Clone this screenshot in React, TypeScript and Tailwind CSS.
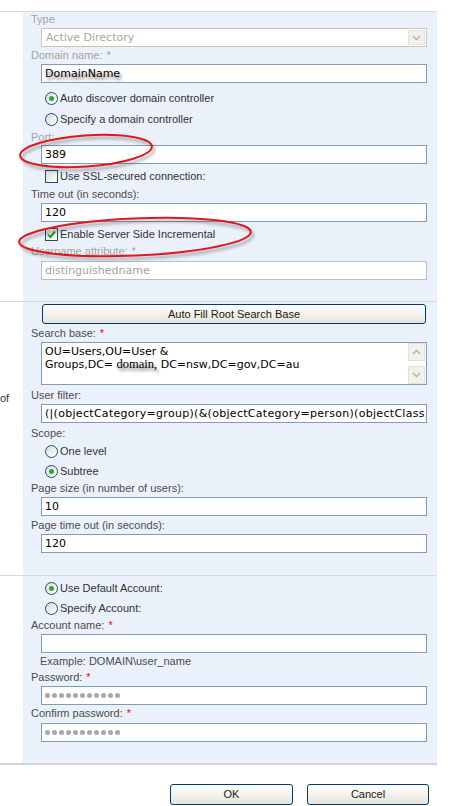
import React from "react";

const inputFont = "font-['DejaVu_Sans',Verdana,sans-serif] text-[11px]";

function Label({text, req, disabled, className = ""}: {
    text: string,
    req?: boolean,
    disabled?: boolean,
    className?: string
}) {
    return (
        <div className={"h-[14px] leading-[14px] whitespace-nowrap " + (disabled ? "text-[#a3a3a3] " : "text-[#4d4d4d] ") + className}>
            {text}
            {req && <span className={"ml-[4px] " + (disabled ? "text-[#a3a3a3]" : "text-[#ff0000]")}>*</span>}
        </div>
    )
}

function TextBox({value, disabled, className = ""}: {
    value?: React.ReactNode,
    disabled?: boolean,
    className?: string
}) {
    return (
        <div className={"ml-[10px] w-[386px] h-[19px] bg-white border px-[3px] leading-[17px] overflow-hidden whitespace-nowrap " + inputFont + " " +
            (disabled ? "border-[#b4bfcb] text-[#a3a3a3] " : "border-[#7f9db9] text-black ") + className}>
            {value}
        </div>
    )
}

function Dots() {
    return (
        <div className="flex items-center gap-[2px] h-full">
            {Array.from({length: 11}).map((_, i) =>
                <span key={i} className="w-[5px] h-[5px] rounded-full bg-[#a9a9a9]"/>)}
        </div>
    )
}

function Radio({checked}: {checked?: boolean}) {
    return (
        <span className="w-[13px] h-[13px] rounded-full border border-[#1c5180] bg-linear-to-br from-[#dcdcd5] to-white flex items-center justify-center shrink-0">
            {checked && <span className="w-[5px] h-[5px] rounded-full bg-[#2fa82f]"/>}
        </span>
    )
}

function RadioRow({label, checked, className = ""}: {label: string, checked?: boolean, className?: string}) {
    return (
        <div className={"ml-[14px] flex items-center gap-[2px] text-[#333333] whitespace-nowrap " + className}>
            <Radio checked={checked}/>
            <span>{label}</span>
        </div>
    )
}

function CheckRow({label, checked, className = ""}: {label: string, checked?: boolean, className?: string}) {
    return (
        <div className={"ml-[14px] h-[14px] flex items-center gap-[2px] text-[#333333] whitespace-nowrap " + className}>
            <span className="w-[13px] h-[13px] border border-[#1c5180] bg-linear-to-br from-[#dcdcd5] to-white flex items-center justify-center shrink-0">
                {checked &&
                    <svg width="9" height="9" viewBox="0 0 9 9">
                        <polyline points="1,4.5 3.5,7 8,1.5" fill="none" stroke="#21a121" strokeWidth="2"/>
                    </svg>}
            </span>
            <span>{label}</span>
        </div>
    )
}

function Chevron({up}: {up?: boolean}) {
    return (
        <svg width="9" height="6" viewBox="0 0 9 6">
            <polyline points={up ? "1,5 4.5,1.5 8,5" : "1,1 4.5,4.5 8,1"} fill="none" stroke="#b9b9b3" strokeWidth="1.6"/>
        </svg>
    )
}

function XpButton({text, className = ""}: {text: string, className?: string}) {
    return (
        <div className={"h-[20px] rounded-[3px] border border-[#003c74] bg-linear-to-b from-white to-[#e6e4da] flex items-center justify-center text-[#1a1a1a] " + className}>
            {text}
        </div>
    )
}

// red hand-drawn circles over the screenshot
function Annotations() {
    return (
        <svg className="absolute left-0 top-0 pointer-events-none" width="452" height="806">
            <defs>
                <filter id="blur" x="-20%" y="-50%" width="140%" height="200%">
                    <feGaussianBlur stdDeviation="1.5"/>
                </filter>
            </defs>
            <ellipse cx="88" cy="154" rx="66" ry="15.5" transform="rotate(-4 88 154)" fill="none" stroke="#000" strokeOpacity="0.3" strokeWidth="2.5" filter="url(#blur)"/>
            <ellipse cx="86" cy="151" rx="66" ry="15.5" transform="rotate(-4 86 151)" fill="none" stroke="#e3161d" strokeWidth="2"/>
            <ellipse cx="137" cy="240" rx="116" ry="18.5" transform="rotate(-2.5 137 240)" fill="none" stroke="#000" strokeOpacity="0.3" strokeWidth="2.5" filter="url(#blur)"/>
            <ellipse cx="135" cy="237" rx="116" ry="18.5" transform="rotate(-2.5 135 237)" fill="none" stroke="#e3161d" strokeWidth="2"/>
        </svg>
    )
}

function ServerSection() {
    return (
        <div className="flex">
            <div className="w-[23px]"/>
            <div className="flex-1 bg-[#eaf1fb] pl-[8px] pb-[21px]">
                <Label text="Type" disabled/>
                <div className={"mt-[2px] ml-[10px] w-[386px] h-[19px] bg-white border border-[#c9c7b5] flex items-center " + inputFont}>
                    <span className="flex-1 pl-[4px] text-[#aca899] leading-[17px]">Active Directory</span>
                    <span className="w-[17px] h-[15px] mr-[1px] bg-[#f1f0ea] border border-[#e2e1d9] flex items-center justify-center">
                        <Chevron/>
                    </span>
                </div>
                <Label text="Domain name:" req disabled className="mt-[1px]"/>
                <TextBox className="mt-[2px]" value={<span className="[text-shadow:2px_3px_3px_rgba(0,0,0,0.55)]">DomainName</span>}/>
                <RadioRow className="mt-[5px] h-[21px]" label="Auto discover domain controller" checked/>
                <RadioRow className="h-[21px]" label="Specify a domain controller"/>
                <Label text="Port:" disabled/>
                <TextBox className="mt-[1px]" value="389"/>
                <CheckRow className="mt-[5px]" label="Use SSL-secured connection:"/>
                <Label text="Time out (in seconds):" className="mt-[4px]"/>
                <TextBox className="mt-[2px]" value="120"/>
                <CheckRow className="mt-[5px]" label="Enable Server Side Incremental" checked/>
                <Label text="Username attribute:" req disabled className="mt-[3px]"/>
                <TextBox className="mt-[3px]" value="distinguishedname" disabled/>
            </div>
        </div>
    )
}

function SearchSection() {
    return (
        <div className="flex border-t border-[#d9d9d9]">
            <div className="w-[23px] pt-[89px] text-[#333333]">
                <div className="h-[14px] leading-[14px]">of</div>
            </div>
            <div className="flex-1 bg-[#eaf1fb] pl-[8px] pb-[22px]">
                <XpButton text="Auto Fill Root Search Base" className="mt-[2px] ml-[11px] w-[384px]"/>
                <Label text="Search base:" req className="mt-[2px]"/>
                <div className={"mt-[2px] ml-[10px] w-[386px] h-[43px] bg-white border border-[#7f9db9] flex " + inputFont}>
                    <div className="flex-1 pl-[3px] pt-[2px] leading-[13px] text-black">
                        <div>OU=Users,OU=User &amp;</div>
                        <div className="whitespace-nowrap">
                            Groups,DC=&nbsp;
                            <span className="font-['Liberation_Serif',serif] text-[12.5px] [text-shadow:2px_3px_3px_rgba(0,0,0,0.55)]">domain,</span>
                            &nbsp;DC=nsw,DC=gov,DC=au
                        </div>
                    </div>
                    <div className="w-[17px] mr-[1px] flex flex-col justify-between">
                        <span className="h-[18px] bg-[#f1f0ea] border border-[#e2e1d9] flex items-center justify-center"><Chevron up/></span>
                        <span className="h-[18px] bg-[#f1f0ea] border border-[#e2e1d9] flex items-center justify-center"><Chevron/></span>
                    </div>
                </div>
                <Label text="User filter:" className="mt-[3px]"/>
                <TextBox className="mt-[2px]" value={<span className="tracking-[0.3px]">(|(objectCategory=group)(&amp;(objectCategory=person)(objectClass</span>}/>
                <Label text="Scope:" className="mt-[3px]"/>
                <RadioRow className="mt-[1px] h-[20px]" label="One level"/>
                <RadioRow className="h-[20px]" label="Subtree" checked/>
                <Label text="Page size (in number of users):"/>
                <TextBox className="mt-[2px]" value="10"/>
                <Label text="Page time out (in seconds):" className="mt-[2px]"/>
                <TextBox className="mt-[2px]" value="120"/>
            </div>
        </div>
    )
}

function AccountSection() {
    return (
        <div className="flex border-t border-[#d9d9d9] border-b-2 border-b-[#d4d4d4]">
            <div className="w-[23px]"/>
            <div className="flex-1 bg-[#eaf1fb] pl-[8px] pb-[21px]">
                <RadioRow className="mt-[2px] h-[20px]" label="Use Default Account:" checked/>
                <RadioRow className="h-[20px]" label="Specify Account:"/>
                <Label text="Account name:" req/>
                <TextBox className="mt-[2px]"/>
                <div className="mt-[1px] ml-[9px] h-[14px] leading-[14px] text-[#4d4d4d]">Example: DOMAIN\user_name</div>
                <Label text="Password:" req className="mt-[2px]"/>
                <TextBox className="mt-[2px]" value={<Dots/>}/>
                <Label text="Confirm password:" req className="mt-[1px]"/>
                <TextBox className="mt-[3px]" value={<Dots/>}/>
            </div>
        </div>
    )
}

export default function App() {
    return (
        <div className="relative w-[452px] h-[806px] bg-white overflow-hidden font-['Liberation_Sans',Arial,sans-serif] text-[11px]">
            <div className="pt-[11px] w-[437px]">
                <div className="border-t border-[#d9d9d9]">
                    <ServerSection/>
                    <SearchSection/>
                    <AccountSection/>
                </div>
                <div className="mt-[19px] pr-[8px] flex justify-end gap-[14px]">
                    <XpButton text="OK" className="w-[123px] h-[21px]"/>
                    <XpButton text="Cancel" className="w-[122px] h-[21px]"/>
                </div>
            </div>
            <Annotations/>
        </div>
    )
}
